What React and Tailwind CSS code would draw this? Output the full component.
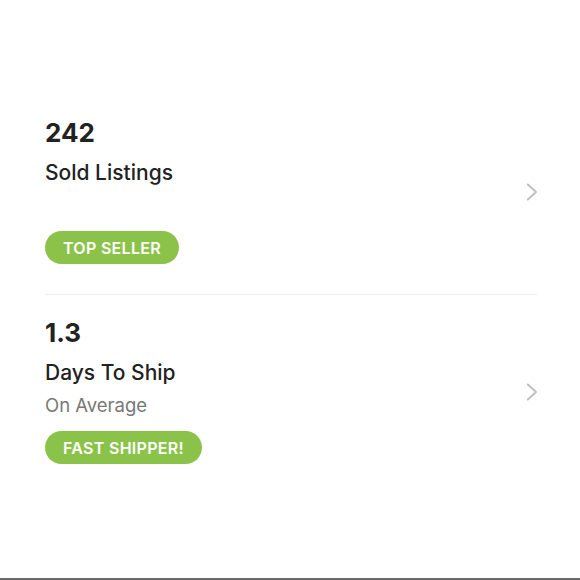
const stats = [
  { value: '242', label: 'Sold Listings', sub: '', badge: 'TOP SELLER' },
  { value: '1.3', label: 'Days To Ship', sub: 'On Average', badge: 'FAST SHIPPER!' },
];

function Chevron() {
  return (
    <svg width="12" height="18" viewBox="0 0 12 18" fill="none" className="mr-[-1px] mt-[2px]">
      <path d="M1.8 1.5 L10 9 L1.8 16.5" stroke="#c0c0c0" strokeWidth="2" strokeLinecap="round" strokeLinejoin="round" />
    </svg>
  );
}

function StatRow({ value, label, sub, badge }) {
  return (
    <div className="flex items-center justify-between">
      <div className="flex flex-col items-start">
        <div className="text-[26px] leading-[30px] font-bold text-[#222222]">{value}</div>
        <div className="mt-[11px] text-[21px] leading-[28px] font-medium text-[#222222]">{label}</div>
        <div className="mt-[3px] h-[30px] text-[18.5px] leading-[30px] text-[#777777]">{sub}</div>
        <div className="mt-[11px] h-[33px] px-[18px] rounded-full bg-[#8bc34a] flex items-center text-[16px] font-semibold tracking-[0.3px] text-white">
          {badge}
        </div>
      </div>
      <Chevron />
    </div>
  );
}

export default function App() {
  return (
    <div
      className="w-[580px] h-[580px] bg-white border-b-2 border-[#6b6b6b] pt-[118px] pl-[45px] pr-[43px]"
      style={{ fontFamily: 'Inter, Lato, sans-serif' }}
    >
      <StatRow {...stats[0]} />
      <div className="mt-[30px] mb-[23px] h-px bg-[#efefef]" />
      <StatRow {...stats[1]} />
    </div>
  );
}
